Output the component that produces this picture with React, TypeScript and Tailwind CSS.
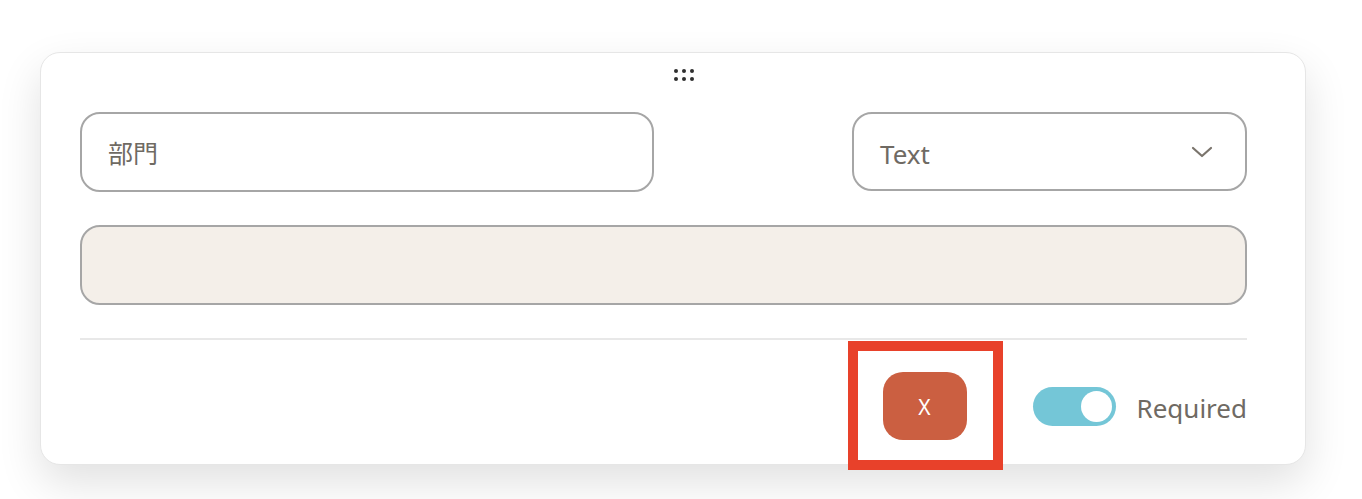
import React from "react";

export default function App() {
  const font = { fontFamily: '"Noto Sans", "Open Sans", "Noto Sans CJK JP", sans-serif' };
  return (
    <div className="w-[1362px] h-[499px] bg-white overflow-hidden pt-[52px] pl-[40px]" style={font}>
      <div className="relative w-[1266px] h-[413px] rounded-[20px] border border-[#e6e6e6] bg-white shadow-[0_18px_44px_rgba(0,0,0,0.12)] pl-[39px] pr-[58px] pt-[16px]">
        {/* drag handle */}
        <div className="ml-[594px] grid grid-cols-3 gap-x-[4px] gap-y-[4px] w-[20px]">
          {Array.from({ length: 6 }).map((_, i) => (
            <span key={i} className="block w-[4px] h-[4px] rounded-full bg-[#2f2f2f]" />
          ))}
        </div>
        {/* top row */}
        <div className="mt-[31px] flex items-start justify-between">
          <div className="w-[574px] h-[80px] rounded-[20px] border-2 border-[#a6a6a6] flex items-center pl-[26px] pt-[3px]">
            <span className="text-[25px] text-[#6f6a63] leading-none">部門</span>
          </div>
          <div className="w-[395px] h-[79px] rounded-[20px] border-2 border-[#a6a6a6] flex items-center justify-between pl-[26px] pr-[32px]">
            <span className="text-[26px] text-[#6f6a63] leading-none pt-[4px]">Text</span>
            <svg width="22" height="12" viewBox="0 0 22 12" fill="none">
              <path d="M2 2 L11 10 L20 2" stroke="#7a746c" strokeWidth="2.2" strokeLinecap="round" strokeLinejoin="round" />
            </svg>
          </div>
        </div>
        {/* textarea */}
        <div className="mt-[33px] h-[80px] rounded-[20px] border-2 border-[#a6a6a6] bg-[#f4efe9]" />
        {/* divider */}
        <div className="mt-[33px] h-[2px] bg-[#e8e8e8]" />
        {/* bottom row */}
        <div className="mt-[32px] flex items-center justify-end">
          <button className="w-[84px] h-[68px] rounded-[20px] bg-[#cb5f41] text-white text-[21px] leading-none flex items-center justify-center pt-[2px]">
            X
          </button>
          <div className="ml-[66px] w-[83px] h-[39px] rounded-full bg-[#74c6d7] flex items-center justify-end pr-[4px]">
            <span className="block w-[31px] h-[31px] rounded-full bg-white" />
          </div>
          <span className="ml-[21px] text-[26px] text-[#6f6a63] leading-none pt-[3px]">Required</span>
        </div>
        {/* highlight box */}
        <div className="absolute left-[807px] top-[288px] w-[155px] h-[129px] border-[10px] border-[#e8412a]" />
      </div>
    </div>
  );
}
